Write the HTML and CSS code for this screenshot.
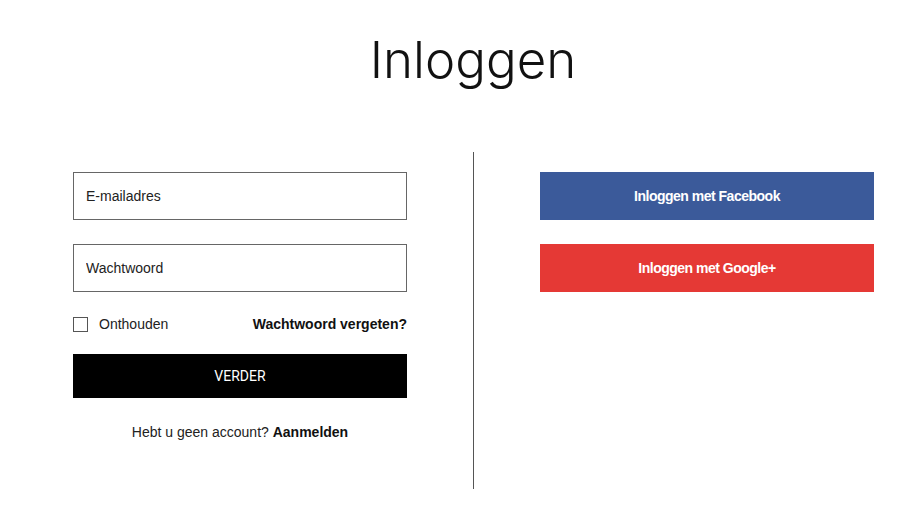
FILE: index.html
```html
<!DOCTYPE html>
<html lang="nl">
<head>
<meta charset="utf-8">
<title>Inloggen</title>
<link rel="stylesheet" href="styles.css">
</head>
<body>
<div class="page">
  <h1 class="title">Inloggen</h1>
  <div class="panels">
    <form class="col left" onsubmit="return false">
      <input class="field" type="email" placeholder="E-mailadres">
      <input class="field" type="password" placeholder="Wachtwoord">
      <div class="row">
        <label class="remember"><span class="box"></span>Onthouden</label>
        <a class="forgot" href="#">Wachtwoord vergeten?</a>
      </div>
      <button class="submit" type="submit">VERDER</button>
      <p class="signup">Hebt u geen account? <a href="#">Aanmelden</a></p>
    </form>
    <div class="divider"></div>
    <div class="col right">
      <button class="social fb" type="button">Inloggen met Facebook</button>
      <button class="social gp" type="button">Inloggen met Google+</button>
    </div>
  </div>
</div>
</body>
</html>
```
FILE: styles.css
```css
* { box-sizing: border-box; }
html, body { margin: 0; padding: 0; background: #fff; }
body { font-family: "Liberation Sans", Arial, sans-serif; color: #111; }
.page { width: 923px; height: 529px; }
.title {
  margin: 0;
  padding-top: 27px;
  padding-left: 23px;
  height: 152px;
  text-align: center;
  font-family: Inter, "DejaVu Sans", sans-serif;
  font-weight: 300;
  font-size: 51px;
  line-height: 66px;
  letter-spacing: 0;
  color: #111;
}
.panels {
  display: flex;
  padding-left: 73px;
}
.col { width: 334px; padding-top: 20px; display: flex; flex-direction: column; }
.divider { width: 1px; height: 337px; background: #555; margin: 0 66px; }
.field {
  display: block;
  width: 334px;
  height: 48px;
  border: 1px solid #666;
  padding: 0 12px;
  font-family: "Liberation Sans", Arial, sans-serif;
  font-size: 14px;
  color: #222;
  margin: 0 0 24px;
  outline: none;
}
.field::placeholder { color: #222; opacity: 1; }
.row {
  display: flex;
  justify-content: space-between;
  align-items: center;
  height: 22px;
  margin-top: -3px;
  font-size: 14px;
}
.remember { display: flex; align-items: center; color: #222; }
.box { width: 15px; height: 15px; border: 1px solid #555; margin-right: 11px; }
.forgot { color: #111; font-weight: bold; text-decoration: none; }
.submit {
  margin-top: 19px;
  height: 44px;
  width: 334px;
  border: 0;
  background: #000;
  color: #fff;
  font-family: Roboto, "Liberation Sans", sans-serif;
  font-size: 14px;
  cursor: pointer;
}
.signup { margin: 26px 0 0; text-align: center; font-size: 14px; color: #222; }
.signup a { color: #111; font-weight: bold; text-decoration: none; }
.social {
  width: 334px;
  height: 48px;
  border: 0;
  margin-bottom: 24px;
  color: #fff;
  font-family: "Liberation Sans", Arial, sans-serif;
  font-weight: bold;
  font-size: 14px;
  letter-spacing: -0.5px;
  cursor: pointer;
}
.fb { background: #3b5a9a; }
.gp { background: #e53935; }
```
